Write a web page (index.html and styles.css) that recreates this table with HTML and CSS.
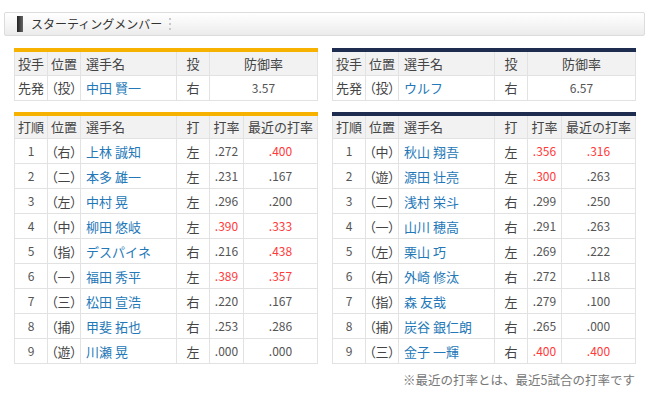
FILE: index.html
```html
<!DOCTYPE html>
<html lang="ja">
<head>
<meta charset="utf-8">
<title>スターティングメンバー</title>
<link rel="stylesheet" href="styles.css">
</head>
<body>
<div class="title-bar">
  <span class="title-icon"></span>
  <h2 class="title-text">スターティングメンバー</h2>
  <span class="title-dots"><i></i><i></i><i></i></span>
</div>

<div class="teams">
  <div class="team team-home">
    <table class="tbl pitcher">
      <colgroup><col class="c1"><col class="c2"><col class="c3"><col class="c4"><col class="c5p"></colgroup>
      <tr class="head"><th>投手</th><th>位置</th><th class="name">選手名</th><th>投</th><th>防御率</th></tr>
      <tr><td class="lt">先発</td><td class="pos">（投）</td><td class="name"><a>中田 賢一</a></td><td>右</td><td class="num">3.57</td></tr>
    </table>
    <table class="tbl batting">
      <colgroup><col class="c1"><col class="c2"><col class="c3"><col class="c4"><col class="c5"><col class="c6"></colgroup>
      <tr class="head"><th>打順</th><th>位置</th><th class="name">選手名</th><th>打</th><th>打率</th><th>最近の打率</th></tr>
      <tr><td class="num">1</td><td class="pos">（右）</td><td class="name"><a>上林 誠知</a></td><td>左</td><td class="num">.272</td><td class="num red">.400</td></tr>
      <tr><td class="num">2</td><td class="pos">（二）</td><td class="name"><a>本多 雄一</a></td><td>左</td><td class="num">.231</td><td class="num">.167</td></tr>
      <tr><td class="num">3</td><td class="pos">（左）</td><td class="name"><a>中村 晃</a></td><td>左</td><td class="num">.296</td><td class="num">.200</td></tr>
      <tr><td class="num">4</td><td class="pos">（中）</td><td class="name"><a>柳田 悠岐</a></td><td>左</td><td class="num red">.390</td><td class="num red">.333</td></tr>
      <tr><td class="num">5</td><td class="pos">（指）</td><td class="name"><a>デスパイネ</a></td><td>右</td><td class="num">.216</td><td class="num red">.438</td></tr>
      <tr><td class="num">6</td><td class="pos">（一）</td><td class="name"><a>福田 秀平</a></td><td>左</td><td class="num red">.389</td><td class="num red">.357</td></tr>
      <tr><td class="num">7</td><td class="pos">（三）</td><td class="name"><a>松田 宣浩</a></td><td>右</td><td class="num">.220</td><td class="num">.167</td></tr>
      <tr><td class="num">8</td><td class="pos">（捕）</td><td class="name"><a>甲斐 拓也</a></td><td>右</td><td class="num">.253</td><td class="num">.286</td></tr>
      <tr><td class="num">9</td><td class="pos">（遊）</td><td class="name"><a>川瀬 晃</a></td><td>左</td><td class="num">.000</td><td class="num">.000</td></tr>
    </table>
  </div>

  <div class="team team-away">
    <table class="tbl pitcher">
      <colgroup><col class="c1"><col class="c2"><col class="c3"><col class="c4"><col class="c5p"></colgroup>
      <tr class="head"><th>投手</th><th>位置</th><th class="name">選手名</th><th>投</th><th>防御率</th></tr>
      <tr><td class="lt">先発</td><td class="pos">（投）</td><td class="name"><a>ウルフ</a></td><td>右</td><td class="num">6.57</td></tr>
    </table>
    <table class="tbl batting">
      <colgroup><col class="c1"><col class="c2"><col class="c3"><col class="c4"><col class="c5"><col class="c6"></colgroup>
      <tr class="head"><th>打順</th><th>位置</th><th class="name">選手名</th><th>打</th><th>打率</th><th>最近の打率</th></tr>
      <tr><td class="num">1</td><td class="pos">（中）</td><td class="name"><a>秋山 翔吾</a></td><td>左</td><td class="num red">.356</td><td class="num red">.316</td></tr>
      <tr><td class="num">2</td><td class="pos">（遊）</td><td class="name"><a>源田 壮亮</a></td><td>左</td><td class="num red">.300</td><td class="num">.263</td></tr>
      <tr><td class="num">3</td><td class="pos">（二）</td><td class="name"><a>浅村 栄斗</a></td><td>右</td><td class="num">.299</td><td class="num">.250</td></tr>
      <tr><td class="num">4</td><td class="pos">（一）</td><td class="name"><a>山川 穂高</a></td><td>右</td><td class="num">.291</td><td class="num">.263</td></tr>
      <tr><td class="num">5</td><td class="pos">（左）</td><td class="name"><a>栗山 巧</a></td><td>左</td><td class="num">.269</td><td class="num">.222</td></tr>
      <tr><td class="num">6</td><td class="pos">（右）</td><td class="name"><a>外崎 修汰</a></td><td>右</td><td class="num">.272</td><td class="num">.118</td></tr>
      <tr><td class="num">7</td><td class="pos">（指）</td><td class="name"><a>森 友哉</a></td><td>左</td><td class="num">.279</td><td class="num">.100</td></tr>
      <tr><td class="num">8</td><td class="pos">（捕）</td><td class="name"><a>炭谷 銀仁朗</a></td><td>右</td><td class="num">.265</td><td class="num">.000</td></tr>
      <tr><td class="num">9</td><td class="pos">（三）</td><td class="name"><a>金子 一輝</a></td><td>右</td><td class="num red">.400</td><td class="num red">.400</td></tr>
    </table>
    <p class="note">※最近の打率とは、最近5試合の打率です</p>
  </div>
</div>
</body>
</html>
```

FILE: styles.css
```css
* { box-sizing: border-box; }
html, body { margin: 0; padding: 0; background: #fff; }
body {
  font-family: "Noto Sans CJK JP", "Noto Sans", sans-serif;
  color: #444;
  width: 650px;
  height: 394px;
  overflow: hidden;
}

.title-bar {
  margin: 12px 0 0 4px;
  width: 641px;
  height: 24px;
  border: 1px solid #dcdcdc;
  border-radius: 2px;
  background: linear-gradient(#ffffff 0%, #f6f6f6 50%, #ebebeb 100%);
  display: flex;
  align-items: center;
  padding-left: 12px;
}
.title-icon {
  width: 6px;
  height: 16px;
  background: linear-gradient(90deg, #222, #666);
  margin-right: 8px;
}
.title-text {
  margin: 0;
  font-size: 12px;
  font-weight: normal;
  color: #333;
  line-height: 1;
}
.title-dots {
  display: flex;
  flex-direction: column;
  gap: 3px;
  margin-left: 7px;
}
.title-dots i {
  display: block;
  width: 2px;
  height: 2px;
  background: #c8c8c8;
}

.teams {
  display: grid;
  grid-template-columns: 303px 303px;
  column-gap: 15px;
  padding-left: 14px;
  margin-top: 12px;
}

.tbl {
  border-collapse: collapse;
  table-layout: fixed;
  width: 303px;
  font-size: 13px;
}
.team-home .tbl { border-top: 4px solid #f7b200; }
.team-away .tbl { border-top: 4px solid #1e2c4f; }
.pitcher { margin-bottom: 11px; }

.c1 { width: 33px; }
.c2 { width: 33px; }
.c3 { width: 96px; }
.c4 { width: 33px; }
.c5 { width: 34px; }
.c6 { width: 74px; }
.c5p { width: 108px; }

.tbl th, .tbl td {
  height: 25px;
  padding: 0;
  border: 1px solid #e2e2e2;
  text-align: center;
  font-weight: normal;
  line-height: 1;
  white-space: nowrap;
  overflow: hidden;
}
.tbl .head th { background: #f2f2f2; color: #444; }
.tbl th.name, .tbl td.name { text-align: left; padding-left: 5px; }
.tbl td.lt { text-align: left; padding-left: 3px; }
.tbl td.pos {
  font-feature-settings: "palt";
  text-align: left;
  padding-left: 3px;
  color: #444;
}
.tbl td a { color: #2478b8; text-decoration: none; }
.tbl td.num { font-size: 12px; color: #555; }
.tbl td.red { color: #ff3a3a; }

.note {
  margin: 10px 0 0;
  text-align: right;
  font-size: 12.5px;
  color: #777;
  line-height: 1;
}
```
